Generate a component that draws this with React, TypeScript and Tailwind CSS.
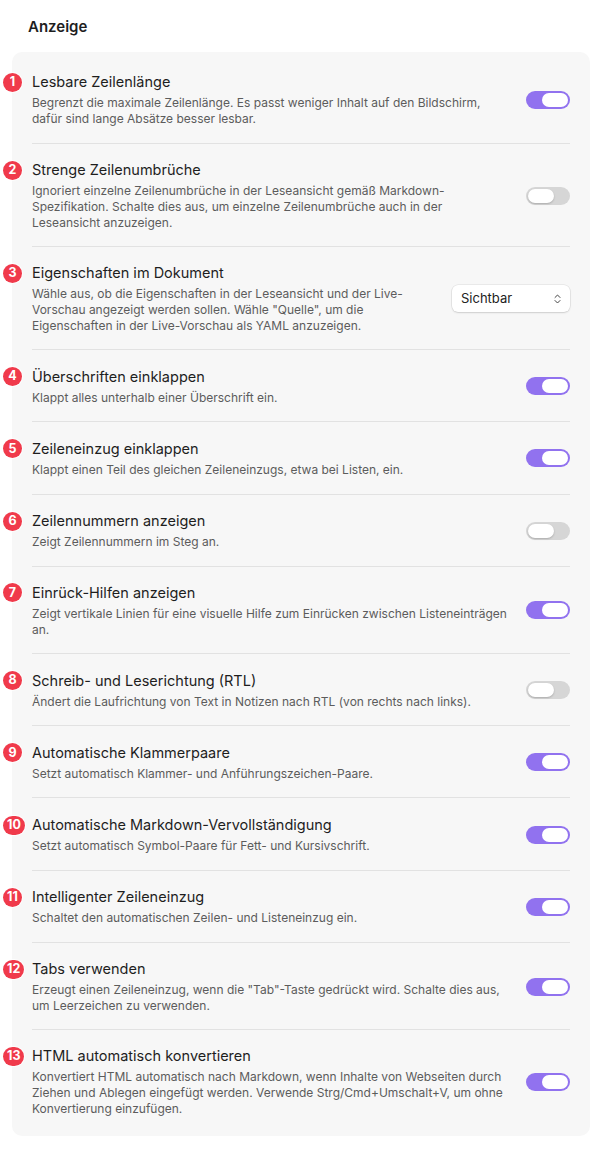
import React from "react";

type Row = {
  title: string;
  desc: string[];
  on?: boolean;
  select?: boolean;
};

const rows: Row[] = [
  {
    title: "Lesbare Zeilenlänge",
    desc: [
      "Begrenzt die maximale Zeilenlänge. Es passt weniger Inhalt auf den Bildschirm,",
      "dafür sind lange Absätze besser lesbar.",
    ],
    on: true,
  },
  {
    title: "Strenge Zeilenumbrüche",
    desc: [
      "Ignoriert einzelne Zeilenumbrüche in der Leseansicht gemäß Markdown-",
      "Spezifikation. Schalte dies aus, um einzelne Zeilenumbrüche auch in der",
      "Leseansicht anzuzeigen.",
    ],
    on: false,
  },
  {
    title: "Eigenschaften im Dokument",
    desc: [
      "Wähle aus, ob die Eigenschaften in der Leseansicht und der Live-",
      'Vorschau angezeigt werden sollen. Wähle "Quelle", um die',
      "Eigenschaften in der Live-Vorschau als YAML anzuzeigen.",
    ],
    select: true,
  },
  {
    title: "Überschriften einklappen",
    desc: ["Klappt alles unterhalb einer Überschrift ein."],
    on: true,
  },
  {
    title: "Zeileneinzug einklappen",
    desc: ["Klappt einen Teil des gleichen Zeileneinzugs, etwa bei Listen, ein."],
    on: true,
  },
  {
    title: "Zeilennummern anzeigen",
    desc: ["Zeigt Zeilennummern im Steg an."],
    on: false,
  },
  {
    title: "Einrück-Hilfen anzeigen",
    desc: [
      "Zeigt vertikale Linien für eine visuelle Hilfe zum Einrücken zwischen Listeneinträgen",
      "an.",
    ],
    on: true,
  },
  {
    title: "Schreib- und Leserichtung (RTL)",
    desc: ["Ändert die Laufrichtung von Text in Notizen nach RTL (von rechts nach links)."],
    on: false,
  },
  {
    title: "Automatische Klammerpaare",
    desc: ["Setzt automatisch Klammer- und Anführungszeichen-Paare."],
    on: true,
  },
  {
    title: "Automatische Markdown-Vervollständigung",
    desc: ["Setzt automatisch Symbol-Paare für Fett- und Kursivschrift."],
    on: true,
  },
  {
    title: "Intelligenter Zeileneinzug",
    desc: ["Schaltet den automatischen Zeilen- und Listeneinzug ein."],
    on: true,
  },
  {
    title: "Tabs verwenden",
    desc: [
      'Erzeugt einen Zeileneinzug, wenn die "Tab"-Taste gedrückt wird. Schalte dies aus,',
      "um Leerzeichen zu verwenden.",
    ],
    on: true,
  },
  {
    title: "HTML automatisch konvertieren",
    desc: [
      "Konvertiert HTML automatisch nach Markdown, wenn Inhalte von Webseiten durch",
      "Ziehen und Ablegen eingefügt werden. Verwende Strg/Cmd+Umschalt+V, um ohne",
      "Konvertierung einzufügen.",
    ],
    on: true,
  },
];

function Toggle({ on }: { on: boolean }) {
  return (
    <div
      className={
        on
          ? "relative h-[18px] w-[44px] shrink-0 rounded-full bg-[#9172ef]"
          : "relative h-[18px] w-[44px] shrink-0 rounded-full bg-[#d6d6d6]"
      }
    >
      <div
        className={
          on
            ? "absolute right-[2px] top-[2px] h-[14px] w-[26px] rounded-full bg-white"
            : "absolute left-[2px] top-[2px] h-[14px] w-[26px] rounded-full bg-white shadow-[0_1px_2px_rgba(0,0,0,0.2)]"
        }
      />
    </div>
  );
}

function Select() {
  return (
    <div className="flex h-[27px] w-[118px] shrink-0 items-center justify-between rounded-[6px] bg-white pl-[9px] pr-[9px] text-[13px] text-[#222] shadow-[0_0_0_0.5px_rgba(0,0,0,0.1),0_1px_2px_rgba(0,0,0,0.12)]">
      <span>Sichtbar</span>
      <svg width="7" height="10" viewBox="0 0 7 10" fill="none">
        <path d="M1 3.5 L3.5 1 L6 3.5" stroke="#444" strokeWidth="1" strokeLinecap="round" strokeLinejoin="round" />
        <path d="M1 6.5 L3.5 9 L6 6.5" stroke="#444" strokeWidth="1" strokeLinecap="round" strokeLinejoin="round" />
      </svg>
    </div>
  );
}

export default function App() {
  return (
    <div
      className="min-h-[1156px] w-[611px] bg-white"
      style={{ fontFamily: "Inter, 'Noto Sans', sans-serif" }}
    >
      <div className="pl-[28px] pt-[17px] text-[15px] font-semibold leading-[20px] text-[#1e1e1e]">
        Anzeige
      </div>
      <div className="ml-[12px] mt-[15px] w-[578px] rounded-[10px] bg-[#f7f7f7] pb-[4px] pt-[4px]">
        {rows.map((r, i) => (
          <div
            key={i}
            className={
              (i === 0
                ? "mx-[20px] flex items-center gap-[16px] pb-[16px] pt-[16px]"
                : "mx-[20px] flex items-center gap-[16px] border-t border-[#e2e2e2] pb-[15px] pt-[16px]") +
              (r.desc.length === 1 ? " min-h-[72.3px]" : "")
            }
          >
            <div className="min-w-0 flex-1">
              <div className="relative text-[14.5px] leading-[20px] text-[#1e1e1e]">
                <span className="absolute left-[-29px] top-[0.5px] flex h-[19px] min-w-[19px] items-center justify-center rounded-full bg-[#f03a4b] px-[4px] text-[12.5px] font-bold leading-none text-white shadow-[0_0_0_1px_rgba(255,255,255,0.8)]">
                  {i + 1}
                </span>
                {r.title}
              </div>
              <div className="mt-[3px] whitespace-nowrap text-[12px] leading-[16px] text-[#5c5c5c]">
                {r.desc.map((l, j) => (
                  <div key={j}>{l}</div>
                ))}
              </div>
            </div>
            {r.select ? <Select /> : <Toggle on={!!r.on} />}
          </div>
        ))}
      </div>
    </div>
  );
}
